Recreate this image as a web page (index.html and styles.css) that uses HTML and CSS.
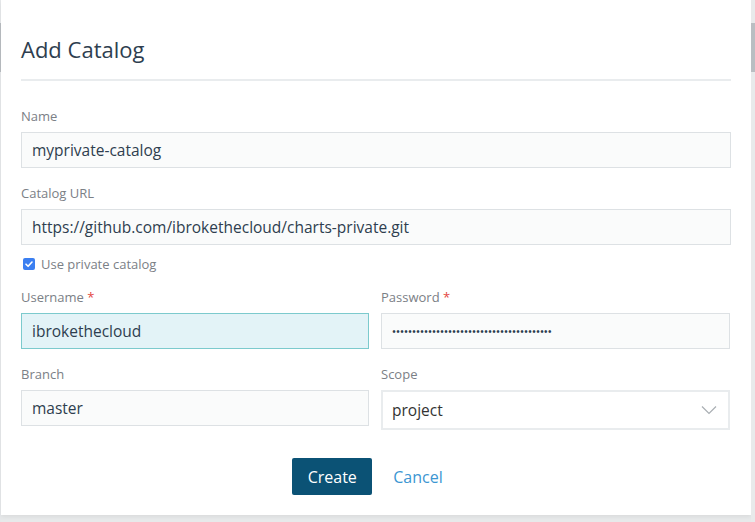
FILE: index.html
```html
<!DOCTYPE html>
<html lang="en">
<head>
<meta charset="utf-8">
<title>Add Catalog</title>
<link rel="stylesheet" href="styles.css">
</head>
<body>
<div class="page">
  <div class="edge"><div class="edge-mark"></div></div>
  <div class="modal">
    <h1 class="title">Add Catalog</h1>
    <hr class="divider">
    <div class="field">
      <label class="label">Name</label>
      <input class="input" type="text" value="myprivate-catalog">
    </div>
    <div class="field">
      <label class="label">Catalog URL</label>
      <input class="input" type="text" value="https://github.com/ibrokethecloud/charts-private.git">
    </div>
    <label class="check-row">
      <span class="checkbox"><svg viewBox="0 0 12 12" width="12" height="12"><path d="M3 6.2 L5.1 8.3 L9 4" fill="none" stroke="#fff" stroke-width="1.6" stroke-linecap="round" stroke-linejoin="round"/></svg></span>
      <span class="check-text">Use private catalog</span>
    </label>
    <div class="grid">
      <div class="field tight">
        <label class="label">Username <span class="req">*</span></label>
        <input class="input focus" type="text" value="ibrokethecloud">
      </div>
      <div class="field tight">
        <label class="label">Password <span class="req">*</span></label>
        <div class="input dots">••••••••••••••••••••••••••••••••••••••••</div>
      </div>
      <div class="field">
        <label class="label">Branch</label>
        <input class="input" type="text" value="master">
      </div>
      <div class="field">
        <label class="label">Scope</label>
        <div class="select">
          <span>project</span>
          <svg class="chev" viewBox="0 0 16 10" width="16" height="10"><path d="M1 1.5 L8 8.5 L15 1.5" fill="none" stroke="#a9aeb3" stroke-width="1.2"/></svg>
        </div>
      </div>
    </div>
    <div class="actions">
      <button class="btn primary" type="button">Create</button>
      <button class="btn link" type="button">Cancel</button>
    </div>
  </div>
  <div class="scroll"><div class="thumb"></div></div>
</div>
</body>
</html>
```

FILE: styles.css
```css
* { box-sizing: border-box; }
html, body {
  margin: 0;
  padding: 0;
  background: #e7e9ea;
  font-family: "Open Sans", Lato, sans-serif;
}
.page {
  display: flex;
  width: 755px;
  height: 522px;
  overflow: hidden;
}
.edge {
  width: 1px;
  flex: none;
  background: #e6e8ea;
}
.edge-mark {
  margin-top: 23px;
  height: 49px;
  background: #b9bdc1;
}
.scroll {
  width: 4px;
  flex: none;
  background: #e8eaeb;
}
.thumb {
  margin-top: 23px;
  height: 49px;
  background: #babec2;
}
.modal {
  width: 750px;
  height: 515px;
  flex: none;
  background: #fff;
  padding: 0 20px;
  box-shadow: 0 2px 4px rgba(0,0,0,0.06);
}
.title {
  margin: 37px 0 0;
  font-size: 22px;
  line-height: 24px;
  font-weight: 400;
  color: #2e3e4f;
}
.divider {
  margin: 18px 0 0;
  border: 0;
  height: 2px;
  background: #e9ecee;
}
.field {
  display: flex;
  flex-direction: column;
  margin-top: 26px;
}
.field + .field { margin-top: 16px; }
.label {
  font-size: 13px;
  line-height: 18px;
  color: #7b8086;
  margin-bottom: 7px;
}
.req { color: #e3463e; }
.input {
  height: 36px;
  width: 100%;
  border: 1px solid #dde1e4;
  background: #fafbfb;
  padding: 0 10px;
  font-family: "Open Sans", Lato, sans-serif;
  font-size: 15.5px;
  color: #2e3e4f;
  outline: none;
  border-radius: 0;
  margin: 0;
}
.input.focus {
  background: #e3f3f7;
  border-color: #7ccacd;
}
.dots {
  display: flex;
  align-items: center;
  font-family: Lato, sans-serif;
  font-size: 6.9px;
  letter-spacing: 0;
  color: #2e3e4f;
  overflow: hidden;
  white-space: nowrap;
}
.check-row {
  display: flex;
  align-items: center;
  margin-top: 10px;
  height: 18px;
  padding-left: 2px;
}
.checkbox {
  width: 12px;
  height: 12px;
  border-radius: 2px;
  background: #3b7ff1;
  display: flex;
  align-items: center;
  justify-content: center;
}
.check-text {
  margin-left: 6px;
  font-size: 13px;
  color: #7b8086;
}
.grid {
  display: grid;
  grid-template-columns: 348px 349px;
  column-gap: 12px;
  margin-top: 15px;
}
.grid .field { margin-top: 16px; }
.grid .field.tight { margin-top: 0; }
.select {
  height: 40px;
  border: 2px solid #e9ecee;
  background: #fff;
  display: flex;
  align-items: center;
  justify-content: space-between;
  padding: 0 11px 0 9px;
  font-size: 15.5px;
  color: #333;
}
.actions {
  display: flex;
  justify-content: center;
  margin-top: 28px;
  padding-left: 4px;
}
.btn {
  font-family: "Open Sans", Lato, sans-serif;
  font-size: 16px;
  height: 37px;
  border: 0;
  cursor: pointer;
}
.btn.primary {
  width: 80px;
  background: #0b5275;
  color: #fff;
  border-radius: 2px;
}
.btn.link {
  background: transparent;
  color: #3c96d2;
  padding: 0 21px;
}
```
